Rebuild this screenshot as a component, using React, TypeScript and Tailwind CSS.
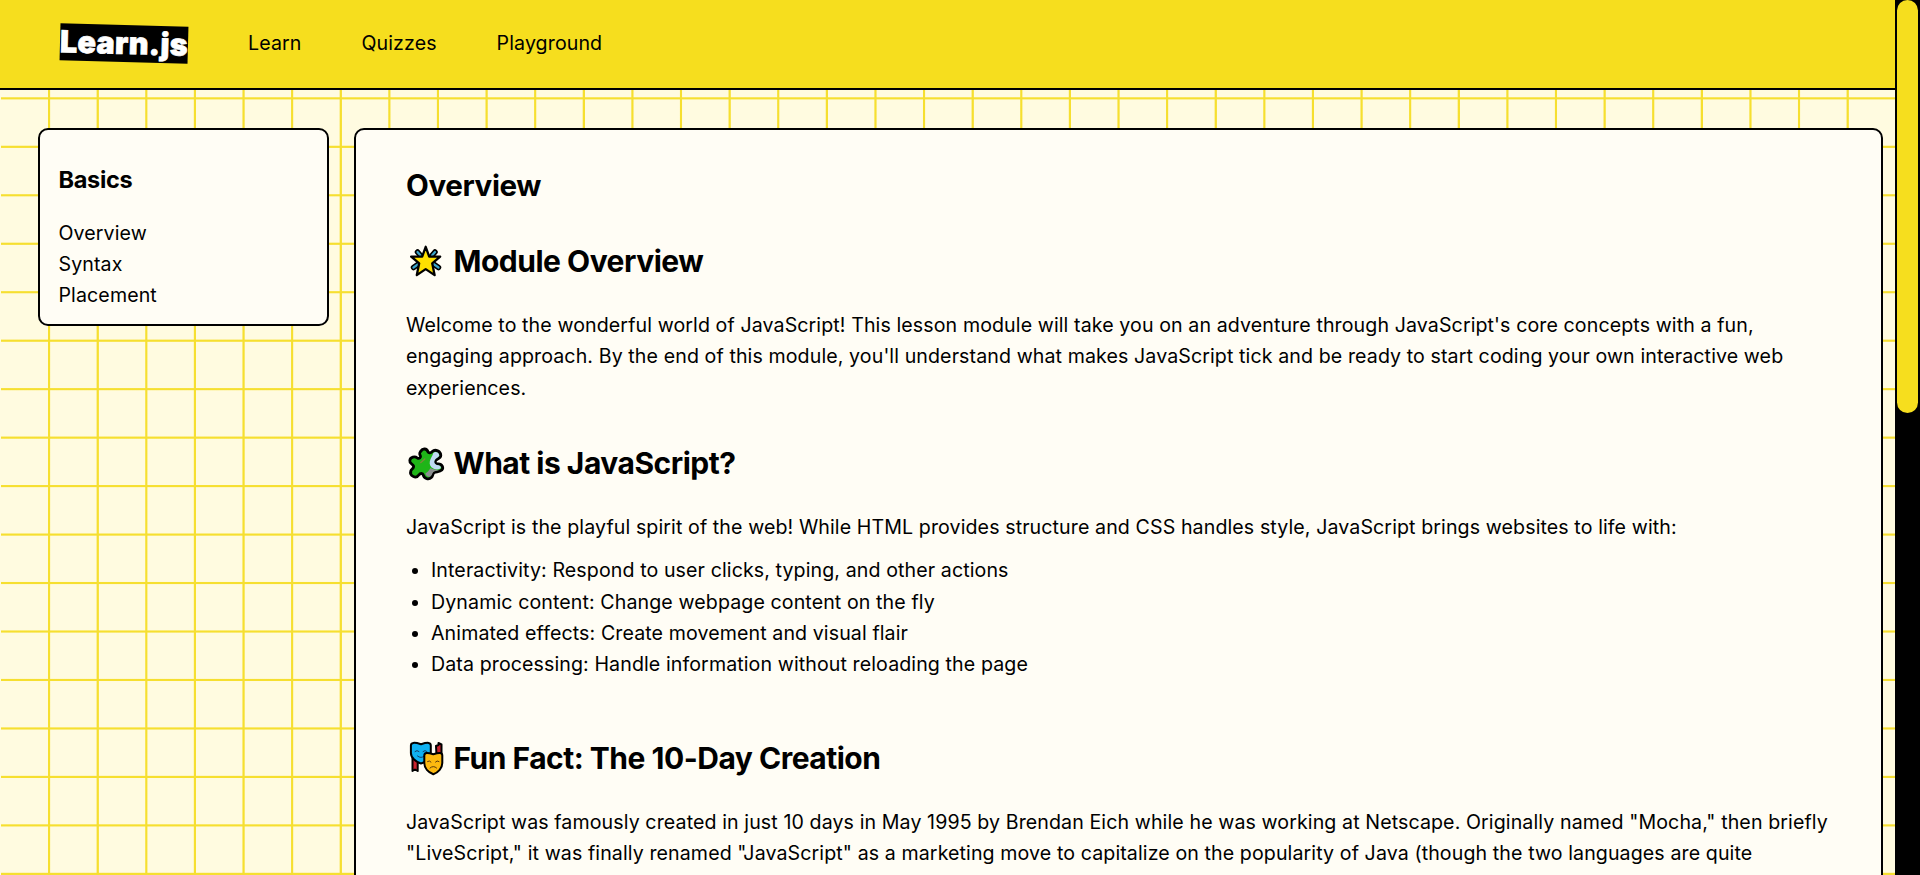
import React from "react";

const Star = () => (
  <svg viewBox="0 0 40 40" className="h-10 w-10 shrink-0">
    <g strokeLinecap="round">
      <path d="M11.500 10l3 3.500M29 10l-3 3.500M7.500 25.500l5-3.500M32.500 25.500l-5-3.500" stroke="#000" strokeWidth="5.500" />
      <path d="M11.500 10l3 3.500M29 10l-3 3.500M7.500 25.500l5-3.500M32.500 25.500l-5-3.500" stroke="#3aa5cb" strokeWidth="2.200" />
    </g>
    <path d="M19.700 4.800l3.500 9.800h11l-8 6.700 2.400 11.800-8.900-6-8.900 6 2.400-11.800-8-6.700h11z" fill="#fee000" stroke="#000" strokeWidth="2.300" strokeLinejoin="round" />
  </svg>
);

const Puzzle = () => (
  <svg viewBox="0 0 40 40" className="h-10 w-10 shrink-0">
    <g transform="translate(0.8 0)">
      <path d="M14 7c2-3 6-2.500 7 .5 1 2 3 1.500 4.500 0 3-3 8.500 0 8.500 4 0 3-3.500 3-5 5s0 3.500 2.500 3.500c4 0 5.500 4 3.500 6s-5.500 1.500-7.500 2.500-1 3-3 5c-3 3-7.500.5-8-2.500-.5-2-3-2-4.500 0-3 4.500-9.500.5-8-4 .7-2 4-3 2.500-5.500-1-2-4-2-3.500-5 .6-3.500 5-4.500 7.500-2.500 2 1 4-.5 3-2.500-.8-1.500-1.500-2.500 1-4.500z" fill="#1fb518" stroke="#000" strokeWidth="2.800" strokeLinejoin="round" />
      <path d="M26.500 9c2.500-2.300 6 0 6 2.500-.5 2-3.500 2.500-4.500 4.500s-.5 4 2 5c3 0 4.500 1.500 4 3-2 2-5.500 1.500-7.500.5-3-1.500-4-4-3.500-7s3-6 3.500-8.500z" fill="#bfd9f2" />
      <path d="M23.500 24c3 1.500 6.500 2.500 10 1.500-2 1.500-5.500 1-7 2.500s-1 3.500-3 4.500c-2.500 1-4.500-1-5-3 2-1 4-3 5-5.500z" fill="#8c8f90" />
      <path d="M14 18.500l4-3.500" stroke="#7b8a3a" strokeWidth="1.500" strokeLinecap="round" />
    </g>
  </svg>
);

const Masks = () => (
  <svg viewBox="0 0 40 40" className="h-10 w-10 shrink-0">
    <path d="M6.500 14v18l2.500-1.500 2.700 1.500V22zM30 7l2.500-1V4l3 1.500V21l-5-5z" fill="#c9232f" stroke="#000" strokeWidth="2" strokeLinejoin="round" />
    <path d="M4.900 6.500c0-3 3-3.500 10.100-1.300 7.200-2.200 9.800-1.700 9.800 1.300v7.500c0 5-4.800 9.500-9.800 10.500-5-1.500-10.100-5.500-10.100-10.500z" fill="#10b2f2" stroke="#000" strokeWidth="2" />
    <path d="M9 12.500q2-2 4 0M17 12.500q2-2 4 0M11.500 17q3.500 3 7 0" fill="none" stroke="#173f66" strokeWidth="1" strokeLinecap="round" />
    <path d="M18.300 16.500c0-3 3-3 9-1.200C33.300 13.500 36.300 13.500 36.300 16.500v7.500c0 5-4 9.500-9 11.300-5-2-9-6.300-9-11.300z" fill="#fdb90f" stroke="#000" strokeWidth="2" />
    <path d="M21.500 22.500q2-1.500 3.500.5M29.500 23q1.500-2 3.500-.5M24 29q3.300-3 6.600 0" fill="none" stroke="#5c3a0b" strokeWidth="1" strokeLinecap="round" />
  </svg>
);

const Heading = ({ icon, children }: { icon: React.ReactNode; children: React.ReactNode }) => (
  <h2 className="flex h-10 items-center gap-[7.500px] text-[30px] font-bold tracking-[-0.500px]">
    {icon}
    <span>{children}</span>
  </h2>
);

export default function App() {
  return (
    <div className="flex h-[875px] overflow-hidden bg-[#fffbe0] font-['Inter',sans-serif] text-[19.600px] tracking-[0.100px] text-black">
      <div className="flex h-full w-[1895px] flex-col bg-[image:repeating-linear-gradient(90deg,transparent_0_45.5px,#f6df30_46.5px_47.8px,transparent_48.6px_48.61px),repeating-linear-gradient(180deg,transparent_0_45.3px,#f6df30_46.3px_47.5px,transparent_48.4px_48.47px)] bg-[position:2px_0,1px_3px] bg-no-repeat">
        <header className="flex h-[90px] shrink-0 items-center border-b-2 border-black bg-[#f6de1e] pb-[1.500px] pl-[60px]">
          <div className="h-[37px] w-[128px] rotate-[1.5deg] whitespace-nowrap bg-black text-[30.500px] font-black leading-[35px] tracking-[0.300px] text-white [-webkit-text-stroke:0.7px_white]">Learn.js</div>
          <nav className="flex gap-[60px] pl-[60px] pt-[1.500px]">
            <a>Learn</a><a>Quizzes</a><a>Playground</a>
          </nav>
        </header>
        <main className="flex min-h-0 flex-1 items-start gap-[25px] pl-[38px] pt-[38px]">
          <aside className="h-[198px] w-[291px] rounded-[10px] border-2 border-black bg-[#fffdf5] px-[18.500px] pt-[34px]">
            <h3 className="h-8 text-[23.500px] font-bold leading-8 tracking-[-0.300px]">Basics</h3>
            <ul className="pt-[22px] leading-[31.200px]"><li>Overview</li><li>Syntax</li><li>Placement</li></ul>
          </aside>
          <article className="h-[900px] w-[1529px] rounded-[10px] border-2 border-black bg-[#fffdf5] px-[50px] pt-[36px] leading-[31.400px]">
            <h1 className="h-[38px] text-[29.600px] font-bold leading-[38px] tracking-[-0.400px]">Overview</h1>
            <div className="pt-[38px]"><Heading icon={<Star />}>Module Overview</Heading></div>
            <p className="pr-6 pt-7">Welcome to the wonderful world of JavaScript! This lesson module will take you on an adventure through JavaScript's core concepts with a fun, engaging approach. By the end of this module, you'll understand what makes JavaScript tick and be ready to start coding your own interactive web experiences.</p>
            <div className="pt-[39.500px]"><Heading icon={<Puzzle />}>What is JavaScript?</Heading></div>
            <p className="pt-7">JavaScript is the playful spirit of the web! While HTML provides structure and CSS handles style, JavaScript brings websites to life with:</p>
            <ul className="list-disc pl-[25px] pt-3">
              <li>Interactivity: Respond to user clicks, typing, and other actions</li>
              <li>Dynamic content: Change webpage content on the fly</li>
              <li>Animated effects: Create movement and visual flair</li>
              <li>Data processing: Handle information without reloading the page</li>
            </ul>
            <div className="pt-[58px]"><Heading icon={<Masks />}>Fun Fact: The 10-Day Creation</Heading></div>
            <p className="pt-7">JavaScript was famously created in just 10 days in May 1995 by Brendan Eich while he was working at Netscape. Originally named "Mocha," then briefly "LiveScript," it was finally renamed "JavaScript" as a marketing move to capitalize on the popularity of Java (though the two languages are quite different!).</p>
          </article>
        </main>
      </div>
      <div className="h-full flex-1 bg-black px-0.5"><div className="h-[413px] rounded-full bg-[#f6de1e]" /></div>
    </div>
  );
}
